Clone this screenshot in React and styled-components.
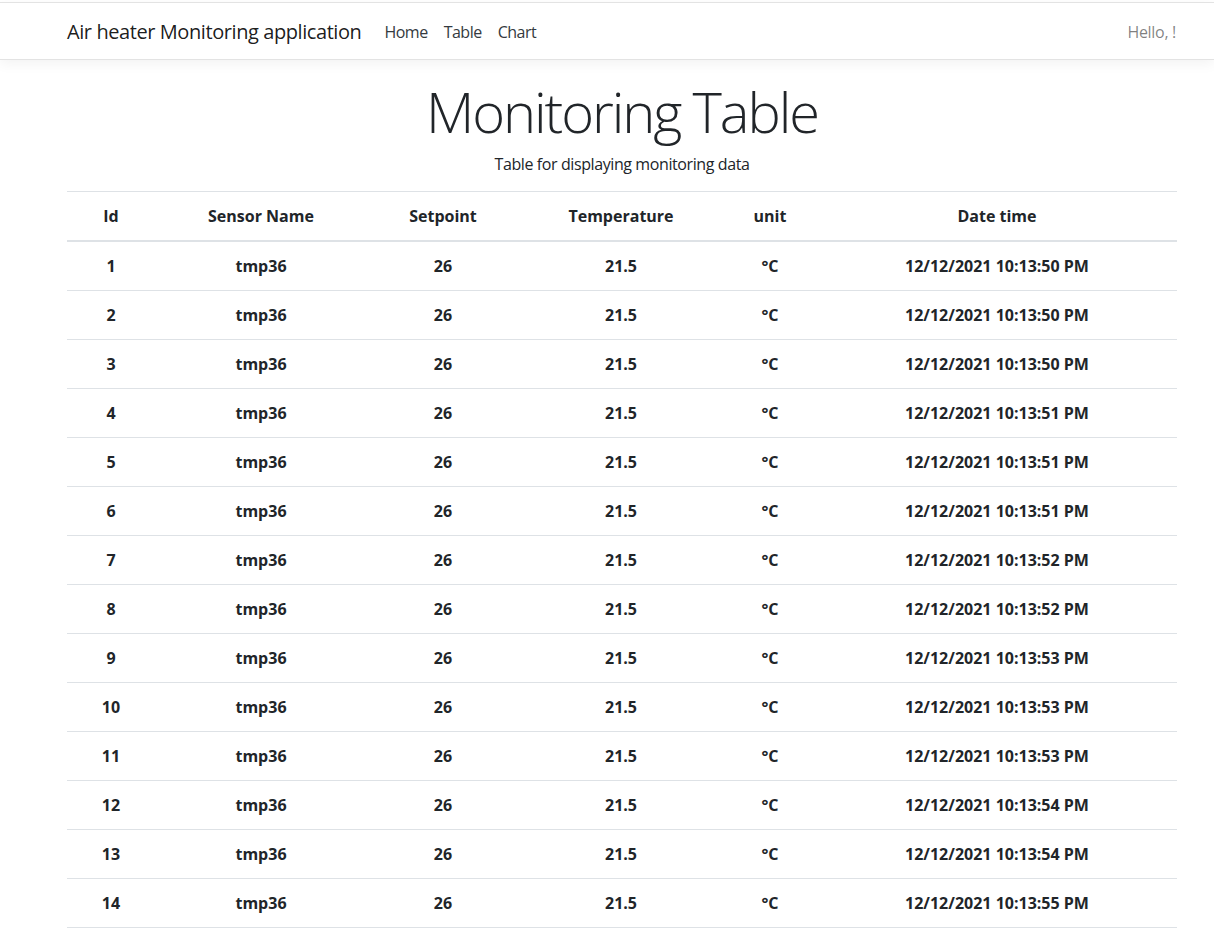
import React from 'react'
import styled, { createGlobalStyle } from 'styled-components'

const GlobalStyle = createGlobalStyle`
  html, body {
    margin: 0;
    padding: 0;
    background: #fff;
  }
  body {
    padding-top: 2px;
    font-family: "Open Sans", "Noto Sans", "Liberation Sans", sans-serif;
    font-size: 16px;
    line-height: 1.5;
    color: #212529;
  }
`

const rows = [
  ['1', '12/12/2021 10:13:50 PM'],
  ['2', '12/12/2021 10:13:50 PM'],
  ['3', '12/12/2021 10:13:50 PM'],
  ['4', '12/12/2021 10:13:51 PM'],
  ['5', '12/12/2021 10:13:51 PM'],
  ['6', '12/12/2021 10:13:51 PM'],
  ['7', '12/12/2021 10:13:52 PM'],
  ['8', '12/12/2021 10:13:52 PM'],
  ['9', '12/12/2021 10:13:53 PM'],
  ['10', '12/12/2021 10:13:53 PM'],
  ['11', '12/12/2021 10:13:53 PM'],
  ['12', '12/12/2021 10:13:54 PM'],
  ['13', '12/12/2021 10:13:54 PM'],
  ['14', '12/12/2021 10:13:55 PM'],
]

const columns = [
  { label: 'Id', width: 88 },
  { label: 'Sensor Name', width: 212 },
  { label: 'Setpoint', width: 152 },
  { label: 'Temperature', width: 204 },
  { label: 'unit', width: 94 },
  { label: 'Date time', width: 360 },
]

function App() {
  return (
    <>
      <GlobalStyle />
      <Navbar>
        <NavInner>
          <Brand>Air heater Monitoring application</Brand>
          <NavLinks>
            <NavLink>Home</NavLink>
            <NavLink>Table</NavLink>
            <NavLink>Chart</NavLink>
          </NavLinks>
          <Greeting>Hello, !</Greeting>
        </NavInner>
      </Navbar>

      <Container>
        <Heading>
          <Title>Monitoring Table</Title>
          <Lead>Table for displaying monitoring data</Lead>
        </Heading>

        <Table>
          <colgroup>
            {columns.map(c => (
              <col key={c.label} style={{ width: c.width }} />
            ))}
          </colgroup>
          <thead>
            <tr>
              {columns.map(c => (
                <HeadCell key={c.label}>{c.label}</HeadCell>
              ))}
            </tr>
          </thead>
          <tbody>
            {rows.map(([id, time]) => (
              <tr key={id}>
                <Cell>{id}</Cell>
                <Cell>tmp36</Cell>
                <Cell>26</Cell>
                <Cell>21.5</Cell>
                <Cell>°C</Cell>
                <Cell>{time}</Cell>
              </tr>
            ))}
          </tbody>
        </Table>
      </Container>
    </>
  )
}

export default App

const Navbar = styled.nav`
  background: #fff;
  border-top: 1px solid #e3e3e3;
  border-bottom: 1px solid #e3e3e3;
  box-shadow: 0 4px 12px rgba(0, 0, 0, 0.05);
  margin-bottom: 16px;
`

const NavInner = styled.div`
  width: 1110px;
  margin-left: 67px;
  height: 56px;
  display: flex;
  align-items: center;
  padding-top: 1px;
  box-sizing: border-box;
`

const Brand = styled.span`
  font-size: 20px;
  letter-spacing: -0.42px;
  color: rgba(0, 0, 0, 0.9);
  margin-right: 15px;
  white-space: nowrap;
`

const NavLinks = styled.div`
  display: flex;
  flex: 1;
`

const NavLink = styled.a`
  color: #343a40;
  font-size: 16px;
  letter-spacing: -0.5px;
  padding: 8px;
`

const Greeting = styled.span`
  color: rgba(0, 0, 0, 0.5);
  font-size: 16px;
  letter-spacing: -0.3px;
  margin-right: 1px;
`

const Container = styled.main`
  width: 1110px;
  margin-left: 67px;
`

const Heading = styled.div`
  text-align: center;
`

const Title = styled.h1`
  margin: 0 0 7px;
  padding-top: 2px;
  font-size: 56px;
  font-weight: 300;
  letter-spacing: -2.1px;
  line-height: 1.2;
  color: #212529;
`

const Lead = styled.p`
  margin: 0 0 15px;
  font-size: 16px;
  letter-spacing: -0.4px;
`

const Table = styled.table`
  width: 100%;
  border-collapse: collapse;
  table-layout: fixed;
`

const HeadCell = styled.th`
  padding: 12px;
  font-weight: 700;
  text-align: center;
  border-top: 1px solid #dee2e6;
  border-bottom: 2px solid #dee2e6;
  vertical-align: bottom;
`

const Cell = styled.td`
  padding: 12px;
  font-weight: 700;
  text-align: center;
  border-top: 1px solid #dee2e6;
  border-bottom: 1px solid #dee2e6;
`
